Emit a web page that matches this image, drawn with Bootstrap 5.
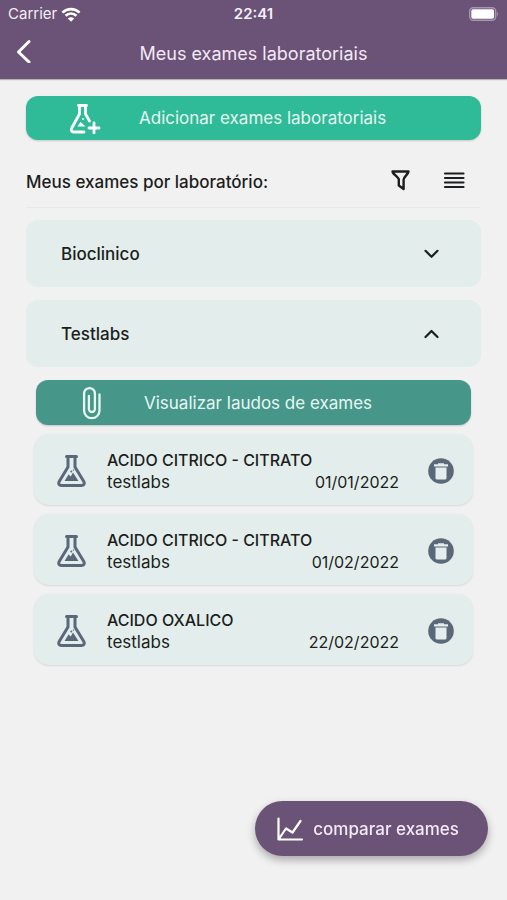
<!DOCTYPE html>
<html lang="pt-BR">
<head>
<meta charset="utf-8">
<meta name="viewport" content="width=device-width, initial-scale=1">
<title>Meus exames laboratoriais</title>
<link href="https://cdn.jsdelivr.net/npm/bootstrap@5.3.0/dist/css/bootstrap.min.css" rel="stylesheet">
<style>
  body { background: #f1f1f1; color: #1c1e20; font-family: Inter, "Liberation Sans", sans-serif; font-size: 16px; line-height: 22px; }
  svg { display: block; flex: none; }
  .app-header { background: #6b5277; color: #f3e9f6; box-shadow: 0 1px 1px rgba(0,0,0,.25); }
  .status-bar { height: 28px; font-size: 15px; color: #f4eef6; }
  .title-bar { height: 51px; }
  .title-bar h1 { font-size: 18px; line-height: 24px; font-weight: 400; }
  .side { flex: 1 1 0; }
  .page-body { padding: 17px 26px 120px; }
  .action { height: 44px; border: 0; border-radius: 12px; color: #e6f8f2; font-size: 17px; box-shadow: 0 1px 2px rgba(0,0,0,.18); }
  .action-add { background: #2fba98; padding: 0 0 0 42px; gap: 37px; }
  .action-view { background: #47968a; padding: 0 0 0 45px; gap: 42px; height: 45px; }
  .list-head { height: 68px; padding-right: 16px; border-bottom: 1px solid #e9e9e9; }
  .list-head h2 { font-size: 17px; line-height: 22px; font-weight: 500; padding-top: 17px; }
  .tools { padding-top: 12px; }
  .tool { border: 0; background: none; padding: 0; color: #1c1e20; }
  .group-toggle { height: 67px; border: 0; border-radius: 12px; background: #e3edeb; color: #1c1e20; padding: 0 42px 0 35px; font-size: 17px; font-weight: 500; }
  .groups { padding-top: 12px; gap: 13px; }
  .group-list { padding: 13px 8px 0; }
  .group-list .action { margin: 0 2px; }
  .exam { height: 71px; border-radius: 15px; background: #e3edeb; box-shadow: 0 1px 2px rgba(0,0,0,.1); padding: 2px 19px 0 22px; }
  .exam h3 { font-size: 16px; line-height: 22px; font-weight: 500; }
  .exam-icon { color: #5a687a; margin-right: 20px; }
  .exam-text { margin-right: 29px; }
  .lab { font-size: 17px; }
  .exams { padding-top: 9px; gap: 9px; }
  .compare { right: 19px; bottom: 44px; height: 55px; border: 0; border-radius: 28px; background: #6b5277; color: #f5e9f8; font-size: 17px; font-weight: 500; padding: 0 29px 0 21px; gap: 7px; box-shadow: 0 4px 9px rgba(0,0,0,.3); }
</style>
</head>
<body>
<svg class="d-none" aria-hidden="true">
  <symbol id="flask" viewBox="0 0 30 34">
    <path d="M10 2.500h10M11.500 3v10L2.700 27.500c-1.200 2.200-.2 4 2.300 4h20c2.500 0 3.500-1.800 2.300-4L18.500 13V3" fill="none" stroke="currentColor" stroke-width="3" stroke-linecap="round" stroke-linejoin="round"/>
    <path d="M8 27l4-6.500 2.300 2 2.200-4 5.500 8.500z" fill="currentColor"/>
    <circle cx="14.800" cy="17.500" r="1" fill="currentColor"/><circle cx="17" cy="16" r=".7" fill="currentColor"/>
  </symbol>
  <symbol id="trash" viewBox="0 0 26 26">
    <circle cx="13" cy="13" r="12.800" fill="#5a687a"/>
    <path d="M10 6.200V5.200h6v1h4v2.200H6V6.200zM7.500 9.600h11V20q0 1.500-1.500 1.500H9Q7.500 21.500 7.500 20z" fill="#e3edeb"/>
  </symbol>
</svg>

<header class="app-header">
  <div class="status-bar d-flex align-items-center px-2">
    <div class="side d-flex align-items-center gap-1"><span>Carrier</span>
      <svg width="20" height="15" viewBox="0 0 18 14" fill="none" stroke="#fff" stroke-width="2.400"><path d="M1 5.200c4.500-4.300 11.500-4.300 16 0M3.900 8.200c3-2.700 7.200-2.700 10.200 0"/><path d="M9 13.800l-3-3.100c1.700-1.500 4.300-1.500 6 0z" fill="#fff" stroke="none"/></svg>
    </div>
    <strong class="fw-semibold">22:41</strong>
    <div class="side d-flex justify-content-end">
      <svg width="30" height="14" viewBox="0 0 30 14"><rect x=".7" y=".7" width="26" height="12.600" rx="3.500" fill="none" stroke="#a796af" stroke-width="1.400"/><rect x="2.300" y="2.300" width="22.800" height="9.400" rx="1.800" fill="#fff"/><path d="M28 4.700q2 2.300 0 4.600z" fill="#a796af"/></svg>
    </div>
  </div>
  <div class="title-bar d-flex align-items-center px-3">
    <div class="side"><button type="button" class="tool" aria-label="Voltar"><svg width="16" height="24" viewBox="0 0 16 24" fill="none" stroke="#fff" stroke-width="3" stroke-linecap="round" stroke-linejoin="round"><path d="M13 2.500L2.500 13 13 23"/></svg></button></div>
    <h1 class="m-0 text-nowrap">Meus exames laboratoriais</h1>
    <div class="side"></div>
  </div>
</header>

<main class="page-body">
  <button type="button" class="action action-add d-flex align-items-center w-100">
    <svg width="34" height="32" viewBox="0 0 34 32" fill="none" stroke="#fff" stroke-width="2.800" stroke-linecap="round" stroke-linejoin="round"><path d="M10.500 3.500h8M11.500 4v8L4 25.500c-1.400 2.800-.7 4.500 1.600 4.500H16M17.500 4v8l4 7"/><path d="M26 21v10M21 26h10"/><path d="M9.500 24.500l3-4.500 1.800 1.500L17.500 24.500z" fill="#fff" stroke="none"/><circle cx="15" cy="17" r="1" fill="#fff" stroke="none"/></svg>
    <span>Adicionar exames laboratoriais</span>
  </button>

  <div class="list-head d-flex align-items-center">
    <h2 class="m-0 me-auto">Meus exames por laboratório:</h2>
    <div class="tools d-flex align-items-center">
      <button type="button" class="tool me-4" aria-label="Filtrar"><svg width="20" height="22" viewBox="0 0 20 22" fill="none" stroke="currentColor" stroke-width="2.400" stroke-linejoin="round"><path d="M1.500 2.500h16c-.3 2.700-4.900 5.600-4.900 8V20L7.800 16.500v-6C7.800 8.100 1.800 5.200 1.500 2.500z"/></svg></button>
      <button type="button" class="tool ms-2" aria-label="Lista"><svg width="22" height="18" viewBox="0 0 22 18" fill="none" stroke="currentColor" stroke-width="2.200" stroke-linecap="round"><path d="M2 2.500h18.500M2 7h18.500M2 11.500h18.500M2 16h18.500"/></svg></button>
    </div>
  </div>

  <div class="groups d-flex flex-column">
    <section>
      <button type="button" class="group-toggle w-100 d-flex align-items-center justify-content-between" aria-expanded="false"><span>Bioclinico</span>
        <svg width="15" height="10" viewBox="0 0 15 10" fill="none" stroke="currentColor" stroke-width="2.200" stroke-linecap="round" stroke-linejoin="round"><path d="M1.500 1.800l6 6 6-6"/></svg></button>
    </section>
    <section>
      <button type="button" class="group-toggle w-100 d-flex align-items-center justify-content-between" data-bs-toggle="collapse" data-bs-target="#testlabs" aria-controls="testlabs" aria-expanded="true"><span>Testlabs</span>
        <svg width="15" height="10" viewBox="0 0 15 10" fill="none" stroke="currentColor" stroke-width="2.200" stroke-linecap="round" stroke-linejoin="round"><path d="M1.500 8l6-6 6 6"/></svg></button>
      <div id="testlabs" class="collapse show">
        <div class="group-list">
          <div class="d-flex"><button type="button" class="action action-view d-flex align-items-center flex-fill">
            <svg width="21" height="34" viewBox="0 0 21 34" fill="none" stroke="#e6f8f2" stroke-width="2.300" stroke-linecap="round"><path d="M18.500 8.500V24.500a7.700 7.700 0 0 1-15.400 0V7.500a5.400 5.400 0 0 1 10.800 0V23a3 3 0 0 1-6 0V10"/></svg>
            <span>Visualizar laudos de exames</span>
          </button></div>
          <div class="exams d-flex flex-column">
            <article class="exam d-flex align-items-center">
              <svg class="exam-icon" width="31" height="34" aria-hidden="true"><use href="#flask"/></svg>
              <div class="exam-text flex-fill"><h3 class="m-0">ACIDO CITRICO - CITRATO</h3><div class="d-flex justify-content-between"><span class="lab">testlabs</span><time datetime="2022-01-01">01/01/2022</time></div></div>
              <button type="button" class="tool" aria-label="Excluir exame"><svg width="26" height="26"><use href="#trash"/></svg></button>
            </article>
            <article class="exam d-flex align-items-center">
              <svg class="exam-icon" width="31" height="34" aria-hidden="true"><use href="#flask"/></svg>
              <div class="exam-text flex-fill"><h3 class="m-0">ACIDO CITRICO - CITRATO</h3><div class="d-flex justify-content-between"><span class="lab">testlabs</span><time datetime="2022-02-01">01/02/2022</time></div></div>
              <button type="button" class="tool" aria-label="Excluir exame"><svg width="26" height="26"><use href="#trash"/></svg></button>
            </article>
            <article class="exam d-flex align-items-center">
              <svg class="exam-icon" width="31" height="34" aria-hidden="true"><use href="#flask"/></svg>
              <div class="exam-text flex-fill"><h3 class="m-0">ACIDO OXALICO</h3><div class="d-flex justify-content-between"><span class="lab">testlabs</span><time datetime="2022-02-22">22/02/2022</time></div></div>
              <button type="button" class="tool" aria-label="Excluir exame"><svg width="26" height="26"><use href="#trash"/></svg></button>
            </article>
          </div>
        </div>
      </div>
    </section>
  </div>
</main>

<button type="button" class="compare position-fixed d-flex align-items-center">
  <svg width="30" height="26" viewBox="0 0 30 26" fill="none" stroke="#fff" stroke-width="2.200" stroke-linecap="round" stroke-linejoin="round"><path d="M2.500 2.500v21H26M3.500 22l6.500-9.500 6.500 4L24.500 5"/></svg>
  <span>comparar exames</span>
</button>
<script src="https://cdn.jsdelivr.net/npm/bootstrap@5.3.0/dist/js/bootstrap.bundle.min.js"></script>
</body>
</html>
